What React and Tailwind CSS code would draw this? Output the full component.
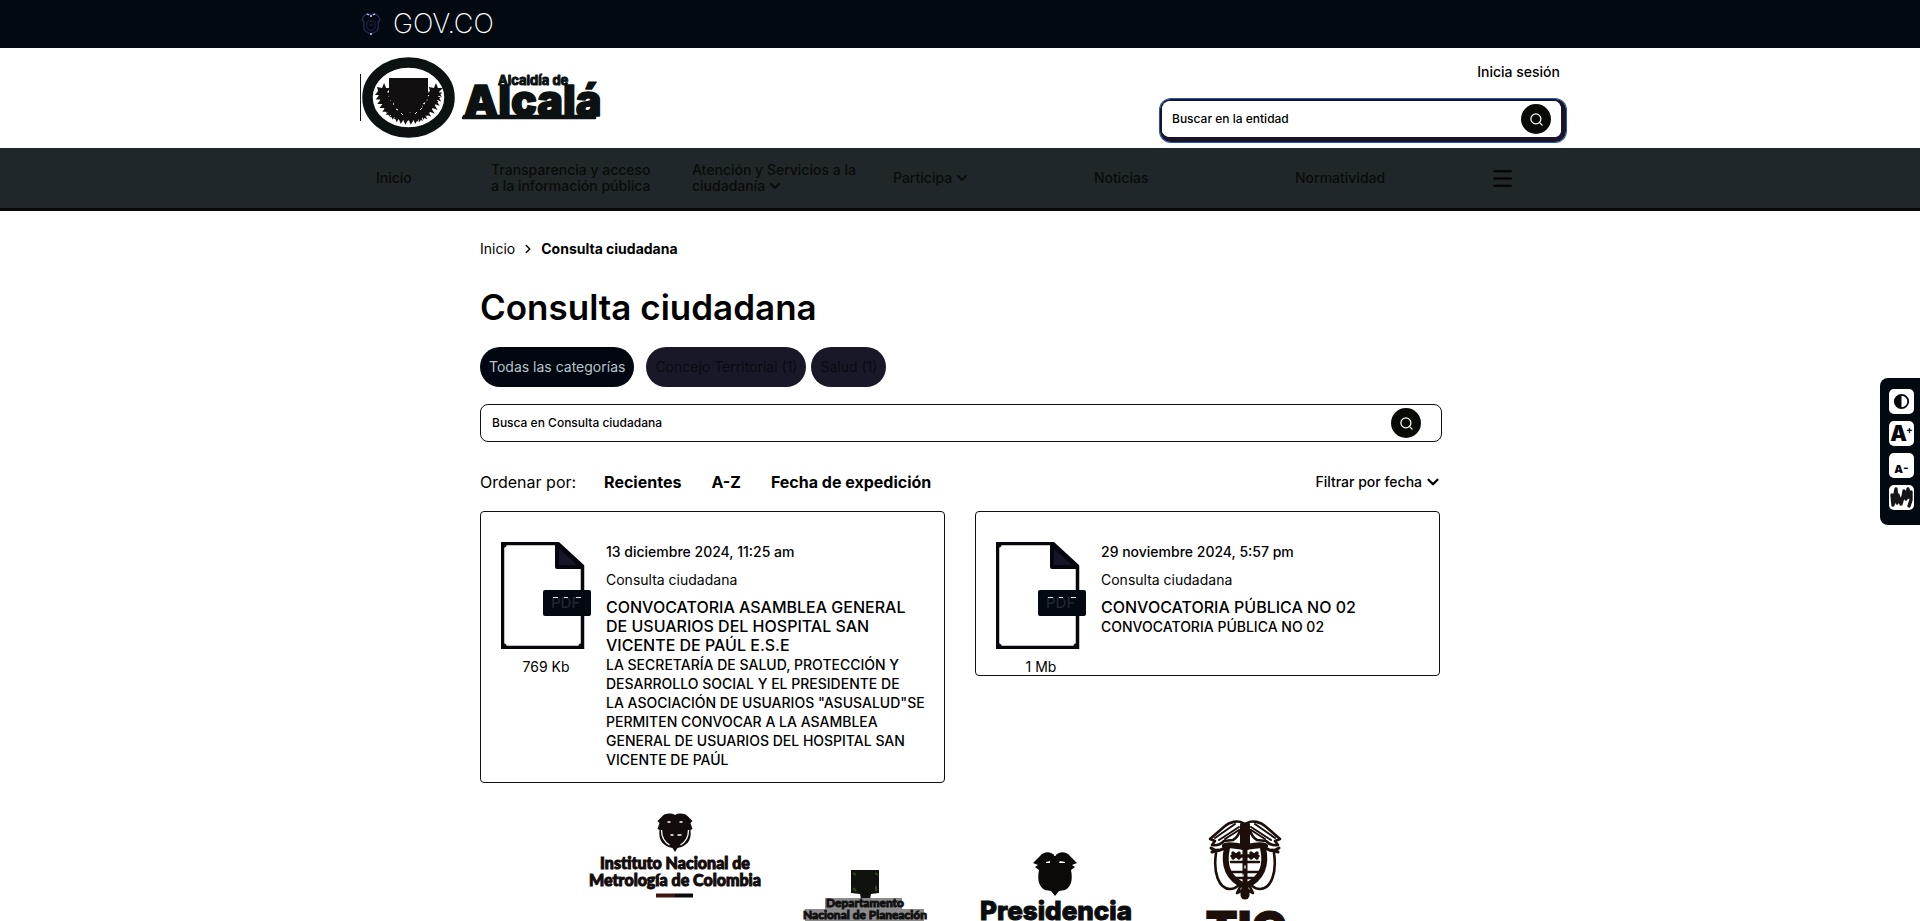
import React from "react";
import { Search, ChevronDown, ChevronRight, Menu } from "lucide-react";

const navItems = [
  { lines: ["Transparencia y acceso", "a la información pública"], menu: false },
  { lines: ["Atención y Servicios a la", "ciudadanía"], menu: true },
  { lines: ["Participa"], menu: true },
  { lines: ["Noticias"], menu: false },
  { lines: ["Normatividad"], menu: false },
];

const documents = [
  {
    date: "13 diciembre 2024, 11:25 am",
    size: "769 Kb",
    title: ["CONVOCATORIA ASAMBLEA GENERAL", "DE USUARIOS DEL HOSPITAL SAN", "VICENTE DE PAÚL E.S.E"],
    text: [
      "LA SECRETARÍA DE SALUD, PROTECCIÓN Y",
      "DESARROLLO SOCIAL Y EL PRESIDENTE DE",
      "LA ASOCIACIÓN DE USUARIOS \"ASUSALUD\"SE",
      "PERMITEN CONVOCAR A LA ASAMBLEA",
      "GENERAL DE USUARIOS DEL HOSPITAL SAN",
      "VICENTE DE PAÚL",
    ],
  },
  {
    date: "29 noviembre 2024, 5:57 pm",
    size: "1 Mb",
    title: ["CONVOCATORIA PÚBLICA NO 02"],
    text: ["CONVOCATORIA PÚBLICA NO 02"],
  },
];

function Lines({ items }) {
  return items.map((line) => (
    <span key={line} className="block whitespace-nowrap">
      {line}
    </span>
  ));
}

function CityLogo() {
  const leaves = [];
  for (let i = 0; i < 9; i++) {
    const a = (Math.PI * (4 + i * 10)) / 180;
    const x = 26 * Math.cos(a);
    const y = 27 * Math.sin(a) - 2;
    leaves.push([49 + x, 37 + y], [49 - x, 37 + y]);
  }
  return (
    <svg className="h-[88px] w-[250px]" viewBox="0 0 250 88" role="img" aria-label="Alcaldía de Alcalá">
      <path d="M.5 20v47" stroke="#10141a" strokeWidth="1" />
      <ellipse cx="48.500" cy="43.500" rx="41" ry="35" fill="#fff" stroke="#0c1112" strokeWidth="10.500" />
      <g fill="#120f10">
        {leaves.map(([x, y], i) => (
          <path key={i} transform={`translate(${x} ${y})`} d="M-6-4l5 1 2-5 2 5 5 0-4 4 3 5-5-2-3 5-2-5-5 0 3-4z" />
        ))}
        <path d="M29 24h39v17c0 8-8 11-19.500 15C37 52 29 49 29 41z" />
        <path d="M35 48h27v10H35z" />
      </g>
      <path d="M41 59l2 2M55 60l2-2M36 55l2 1M60 56l2-2" stroke="#fff" strokeWidth="1" />
      <path d="M104 62h131v2H103z" fill="#0c1112" stroke="#0c1112" strokeWidth="2.500" strokeLinejoin="round" />
      <g fill="#0c1112" stroke="#0c1112" strokeLinejoin="round" fontFamily="Inter, sans-serif">
        <text x="104" y="62" fontSize="43" fontWeight="900" strokeWidth="1.500">Alcalá</text>
        <text x="138" y="31" fontSize="13" fontWeight="700" strokeWidth="1">Alcaldía de</text>
      </g>
    </svg>
  );
}

function PdfIcon() {
  return (
    <svg className="h-[107px] w-[90px]" viewBox="0 0 90 107" aria-hidden="true">
      <path d="M1.500 1.500H57L81.500 24v81.500h-80z" fill="#fff" stroke="#05070d" strokeWidth="3.500" />
      <path d="M3 5l2-2M3 102l2 2M78 104l2-2" stroke="#05070d" strokeWidth="2" />
      <path d="M56 2l25 23H56z" fill="#15152a" stroke="#05070d" strokeWidth="4" strokeLinejoin="round" />
      <rect x="42" y="48" width="48" height="26" rx="2" fill="#020911" />
      <text x="50" y="66" fill="#20262d" fontFamily="Inter, sans-serif" fontSize="15" fontWeight="500">PDF</text>
      <path d="M52 55.500h5M63 55.500h4M75 55.500h5" stroke="#dfe3e6" strokeWidth="1" />
    </svg>
  );
}

function InstituteLogo() {
  return (
    <svg className="w-full" viewBox="0 0 190 140" role="img" aria-label="Instituto Nacional de Metrología de Colombia">
      <g transform="translate(77.500 13)" fill="#130c0d">
        <path d="M17.500 2C14 0 8 0 5 3L0 8l2 2-2 6 2 1c-1 9 2 14 9 17l4 1 2.500 4 2.500-4 4-1c7-3 10-8 9-17l2-1-2-6 2-2-5-5c-3-3-9-3-12.500-1z" />
        <path d="M4 17c0 7 3 12 8 15M31 17c0 7-3 12-8 15" fill="none" stroke="#fff" strokeWidth="1.300" />
        <path d="M10 9h3M22 9h3M13 22h3M20 22h4" stroke="#fff" strokeWidth="1.600" />
      </g>
      <g fill="#130c0d" stroke="#130c0d" strokeWidth="1" fontFamily="Lato, sans-serif" fontWeight="900" fontSize="16" textAnchor="middle">
        <text x="95" y="69">Instituto Nacional de</text>
        <text x="95" y="86">Metrología de Colombia</text>
      </g>
      <path d="M76 95.500h19" stroke="#3c1712" strokeWidth="4" />
      <path d="M95 95.500h18" stroke="#0a0a0c" strokeWidth="4" />
    </svg>
  );
}

function PlanningLogo() {
  return (
    <svg className="w-full" viewBox="0 0 190 140" role="img" aria-label="Departamento Nacional de Planeación">
      <path d="M81 70h28v23l-8 1-1 5h-9l-1-5-9-1z" fill="#10130d" />
      <path d="M83 73l3 2M105 73l3 2M106 86v5M83 88l3 3" stroke="#2f4a1e" strokeWidth="2" />
      <path d="M55 98h77v11h22v15H35v-15h20z" fill="#8b8b8b" />
      <g fill="#111" stroke="#111" strokeWidth="1" fontFamily="Lato, sans-serif" fontWeight="700" fontSize="12" textAnchor="middle">
        <text x="95" y="107">Departamento</text>
        <text x="95" y="119">Nacional de Planeación</text>
      </g>
    </svg>
  );
}

function PresidencyLogo() {
  return (
    <svg className="w-full" viewBox="0 0 190 140" role="img" aria-label="Presidencia">
      <g transform="translate(73 51)" fill="#0c0a09">
        <path d="M22 5C18 0 11 0 7 5L0 12l5 2-3 2 4 3c-2 10 0 17 6 20l6 1 4 5 4-5 6-1c6-3 8-10 6-20l4-3-3-2 5-2-7-7c-4-5-11-5-15 0z" />
        <path d="M13 11l4-1v2h-4zM26 12l1-2 5 1v1z" fill="#fff" />
        <path d="M22 1v4" stroke="#fff" strokeWidth="1.200" />
      </g>
      <text x="96" y="120" fill="#0a0c0e" stroke="#0a0c0e" strokeWidth="1" fontFamily="Inter, sans-serif" fontWeight="800" fontSize="26" textAnchor="middle">
        Presidencia
      </text>
    </svg>
  );
}

function TicLogo() {
  return (
    <svg className="w-full" viewBox="0 0 190 140" role="img" aria-label="TIC">
      <g transform="translate(59 21)" fill="none" stroke="#1c0f0a" strokeWidth="2.600" strokeLinecap="round" strokeLinejoin="round">
        <path d="M34 2C29-1 20 1 16 5L1 18l5 2-3 4c5 1 9-1 12-4l9-1c4-2 6-6 7-10" />
        <path d="M38 2c5-3 14-1 18 3l15 13-5 2 3 4c-5 1-9-1-12-4l-9-1c-4-2-6-6-7-10" />
        <path d="M6 17L26 3M10 19L30 6M16 18l14-9M66 17L46 3M62 19L42 6M56 18L42 9" strokeWidth="2" />
        <path d="M34 4v22h4V4" fill="#1c0f0a" strokeWidth="6" />
        <path d="M16 25c8-3 12 2 20 0 8 2 12-3 20 0" strokeWidth="6" />
        <path d="M2 27c7 5 9 2 14 0M70 27c-7 5-9 2-14 0M3 31l6-2M69 31l-6-2" strokeWidth="3" />
        <path d="M18 27c-4 17 1 31 18 38 17-7 22-21 18-38" strokeWidth="6" />
        <path d="M7 32c-3 20 3 36 14 36 7 0 7-4 11-5M65 32c3 20-3 36-14 36-7 0-7-4-11-5" />
        <path d="M22 41h28M22 51h28M27 57h18" strokeWidth="2.600" />
        <path d="M24 32l6 5M30 32l-6 5M42 32l6 5M48 32l-6 5M23 35h26" strokeWidth="3.500" />
        <path d="M36 29v34" strokeWidth="5" />
        <path d="M36 45v2M34 54v1" stroke="#e8ddd0" strokeWidth="1.500" />
        <path d="M31 66l-3 6 6-3M41 66l3 6-6-3" />
        <path d="M36 70v4" strokeWidth="9" />
      </g>
      <text x="96" y="145" fill="#1c0f0a" stroke="#1c0f0a" strokeWidth="1" fontFamily="Inter, sans-serif" fontWeight="900" fontSize="47" textAnchor="middle">
        TIC
      </text>
    </svg>
  );
}

function SearchButton({ label }) {
  return (
    <button type="submit" aria-label={label} className="flex size-[30px] shrink-0 items-center justify-center rounded-full bg-[#070a05] text-white">
      <Search size={15} strokeWidth={2} />
    </button>
  );
}

function AccessTools() {
  const tool = "flex size-[25px] items-center justify-center rounded-[5px] bg-white text-[#05070d]";
  return (
    <aside className="fixed top-[378px] right-0 flex w-10 flex-col gap-[7px] rounded-l-lg bg-[#020911] pt-[11px] pb-[15px] pl-[9px]">
      <button className={tool} aria-label="Contraste">
        <svg className="size-[17px]" viewBox="0 0 17 17">
          <circle cx="8.500" cy="8.500" r="6.700" fill="none" stroke="currentColor" strokeWidth="1.800" />
          <path d="M8.500 2a6.500 6.500 0 0 0 0 13z" fill="currentColor" />
        </svg>
      </button>
      <button className={tool} aria-label="Aumentar letra">
        <span className="text-[21px] leading-6 font-black">A</span>
        <span className="-ml-px self-start text-[10px] leading-4 font-bold">+</span>
      </button>
      <button className={tool} aria-label="Reducir letra">
        <span className="pt-1.5 text-[11px] leading-4 font-black">A</span>
        <span className="pt-1 text-xs leading-4 font-bold">-</span>
      </button>
      <button className={tool} aria-label="Lengua de señas">
        <svg className="size-[25px]" viewBox="0 0 25 25" fill="none" stroke="#16161a" strokeWidth="3.400" strokeLinecap="round" strokeLinejoin="round">
          <path d="M3 10l1 10 3-16 1 14 1-8 3 9 2-7 1-6 2 8 2-10 1 6 2-3 0 8-2 6" />
          <path d="M4 13h6M14 12h7M16 8h5" />
        </svg>
      </button>
    </aside>
  );
}

export default function App() {
  const pill = "h-10 rounded-[20px] px-[9px] text-sm leading-5";
  return (
    <div className="h-screen overflow-hidden bg-white font-['Inter',sans-serif] text-sm leading-5 text-black">
      <div className="h-12 bg-[#020911]">
        <a href="#gov" className="mx-auto flex h-full w-full max-w-[1200px] items-center text-white">
          <svg className="ml-px h-6 w-5" viewBox="0 0 20 24" fill="none" stroke="#29295a" strokeWidth="1.300" aria-hidden="true">
            <path d="M10 3C6 0 2 3 1 8l2 2c-1 6 0 9 3 10l4 2 4-2c3-1 4-4 3-10l2-2c-1-5-5-8-9-5z" />
            <path d="M6 9v6c0 2 2 3 4 4 2-1 4-2 4-4V9M7 9h6M8 13h4" stroke="#1d1d3c" />
            <path d="M6 2l2 1M12 3l2-1M9 4h2M9 22h2" stroke="#d8d8f0" />
          </svg>
          <span className="ml-3 text-[27px] leading-8 font-extralight">GOV.CO</span>
        </a>
      </div>

      <header className="mx-auto flex h-[100px] w-full max-w-[1200px] justify-between">
        <a href="#inicio" className="pt-1.5">
          <CityLogo />
        </a>
        <div className="flex flex-col items-end pt-3.5">
          <a href="#sesion" className="font-medium">Inicia sesión</a>
          <form className="-mr-1.5 mt-[17px] flex w-[406px] rounded-[11px] border-2 border-r-[5px] border-b-[5px] border-[#191528] ring-1 ring-[#1d56bd]">
            <div className="flex h-9 w-full items-center rounded-lg bg-white px-2.5">
              <input aria-label="Buscar en la entidad" placeholder="Buscar en la entidad" className="min-w-0 flex-1 text-xs font-medium outline-none placeholder:text-black" />
              <SearchButton label="Buscar" />
            </div>
          </form>
        </div>
      </header>

      <nav className="border-b-[3px] border-[#070807] bg-[#20272a] leading-4 font-medium text-[#080c08]">
        <div className="mx-auto flex h-[60px] w-full max-w-[1200px] items-center pl-4">
          <a href="#inicio" className="w-[115px]">Inicio</a>
          {navItems.map(({ lines, menu }) => (
            <a key={lines[0]} href="#menu" className="w-[201px] whitespace-nowrap">
              {lines.map((line, i) => (
                <span key={line} className="flex items-center gap-0.5">
                  {line}
                  {menu && i === lines.length - 1 && <ChevronDown size={16} strokeWidth={3} />}
                </span>
              ))}
            </a>
          ))}
          <button aria-label="Menú" className="-ml-1.5">
            <Menu size={25} strokeWidth={2} className="text-black" />
          </button>
        </div>
      </nav>

      <main className="mx-auto w-full max-w-[960px] pt-7">
        <div className="flex items-center">
          <a href="#inicio">Inicio</a>
          <ChevronRight size={14} strokeWidth={2.5} className="mx-1.5" />
          <span className="font-bold">Consulta ciudadana</span>
        </div>

        <h1 className="mt-7 text-[35px] leading-10 font-semibold">Consulta ciudadana</h1>

        <div className="mt-5 flex">
          <button className={`${pill} mr-3 bg-[#000710] text-[#b9c3ca]`}>Todas las categorías</button>
          <button className={`${pill} mr-[5px] bg-[#181828] text-[#0a0a12]`}>Concejo Territorial (1)</button>
          <button className={`${pill} bg-[#181828] text-[#0a0a12]`}>Salud (1)</button>
        </div>

        <form className="mt-[17px] -mr-0.5 flex h-[38px] items-center rounded-lg border border-[#101014] pr-5 pl-[11px]">
          <input aria-label="Busca en Consulta ciudadana" placeholder="Busca en Consulta ciudadana" className="min-w-0 flex-1 text-xs font-medium outline-none placeholder:text-black" />
          <SearchButton label="Buscar en Consulta ciudadana" />
        </form>

        <div className="mt-[30px] flex items-center text-base leading-5">
          <span>Ordenar por:</span>
          <button className="ml-7 font-bold">Recientes</button>
          <button className="ml-[30px] font-bold">A-Z</button>
          <button className="ml-[30px] font-bold">Fecha de expedición</button>
          <button className="-mr-0.5 ml-auto flex items-center gap-0.5 text-sm font-medium">
            Filtrar por fecha
            <ChevronDown size={18} strokeWidth={3} />
          </button>
        </div>

        <div className="mt-[19px] grid grid-cols-2 items-start gap-[30px]">
          {documents.map((doc) => (
            <a key={doc.date} href="#documento" className="flex gap-[15px] rounded-[4px] border border-[#101014] pt-[30px] pl-5">
              <div className="flex flex-col items-center gap-2.5">
                <PdfIcon />
                <span className="leading-4">{doc.size}</span>
              </div>
              <div className="pb-[13px]">
                <p className="font-medium">{doc.date}</p>
                <p className="mt-2">Consulta ciudadana</p>
                <h2 className="mt-2 text-base leading-[19px] font-medium">
                  <Lines items={doc.title} />
                </h2>
                <p className="leading-[19px] font-medium">
                  <Lines items={doc.text} />
                </p>
              </div>
            </a>
          ))}
        </div>
      </main>

      <footer className="mx-auto mt-[17px] grid max-w-[760px] grid-cols-4">
        <InstituteLogo />
        <PlanningLogo />
        <PresidencyLogo />
        <TicLogo />
      </footer>

      <AccessTools />
    </div>
  );
}
